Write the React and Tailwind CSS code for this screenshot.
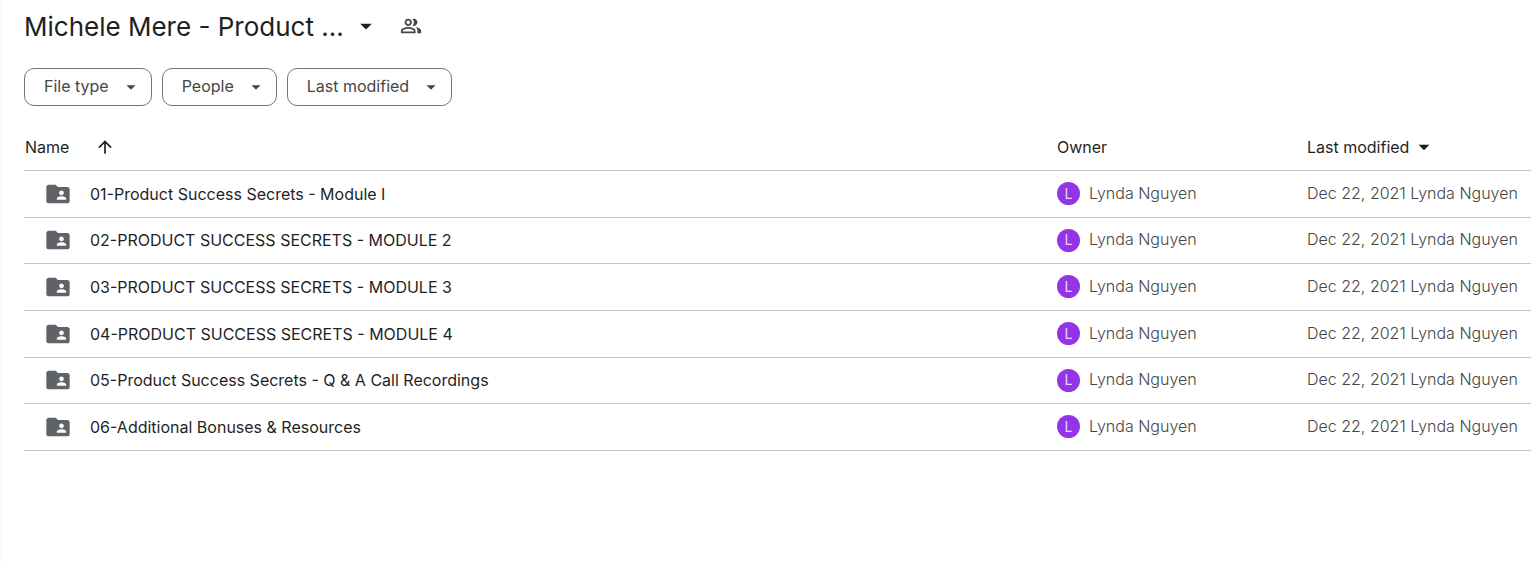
import { MdArrowDropDown, MdArrowUpward, MdFolderShared, MdOutlinePeopleAlt } from 'react-icons/md';

const filters = ['File type', 'People', 'Last modified'];

const folders = [
    '01-Product Success Secrets - Module I',
    '02-PRODUCT SUCCESS SECRETS - MODULE 2',
    '03-PRODUCT SUCCESS SECRETS - MODULE 3',
    '04-PRODUCT SUCCESS SECRETS - MODULE 4',
    '05-Product Success Secrets - Q & A Call Recordings',
    '06-Additional Bonuses & Resources',
].map((name) => ({ name, owner: 'Lynda Nguyen', modified: 'Dec 22, 2021' }));

const FilterChip = ({ label }) => (
    <button type="button" className="flex h-[38px] items-center gap-[11px] rounded-[10px] border border-[#747775] pl-[19px] pr-[9px] text-[#444746]">
        <span className="pb-0.5">{label}</span>
        <MdArrowDropDown size={22} />
    </button>
);

const App = () => {
    return (
        <main className="min-h-screen border-l border-[#f8fafd] bg-white pl-[23px] font-['Inter','Google_Sans',sans-serif] text-base text-[#1f1f1f]">
            <header className="flex h-[52px] items-center">
                <h1 className="text-[26px]">Michele Mere - Product ...</h1>
                <button type="button" aria-label="Folder options" className="ml-2">
                    <MdArrowDropDown size={28} />
                </button>
                <button type="button" aria-label="Shared with" className="ml-5 text-[#444746]">
                    <MdOutlinePeopleAlt size={22} />
                </button>
            </header>

            <div className="mt-4 flex gap-[10px]">
                {filters.map((label) => (
                    <FilterChip key={label} label={label} />
                ))}
            </div>

            <table className="mt-[18px] w-full table-fixed text-left">
                <thead>
                    <tr className="h-[46px] border-b border-[#c7c7c7]">
                        <th className="pl-px font-normal">
                            <button type="button" className="flex items-center gap-[26px]">
                                Name
                                <MdArrowUpward size={20} />
                            </button>
                        </th>
                        <th className="w-[250px] font-normal">Owner</th>
                        <th className="w-[224px] font-normal">
                            <button type="button" className="flex items-center gap-0.5">
                                Last modified
                                <MdArrowDropDown size={26} />
                            </button>
                        </th>
                    </tr>
                </thead>
                <tbody>
                    {folders.map((folder) => (
                        <tr key={folder.name} className="h-[47px] border-b border-[#c7c7c7] nth-[3n+2]:h-[46px]">
                            <td className="pl-px">
                                <a href="#" className="flex items-center gap-[18px] pl-[19px]">
                                    <MdFolderShared size={28} className="shrink-0 text-[#5f6368]" />
                                    <span className="truncate">{folder.name}</span>
                                </a>
                            </td>
                            <td>
                                <div className="flex items-center gap-[9px] font-light text-[#444746]">
                                    <span className="flex size-[23px] items-center justify-center rounded-full bg-[#9334e6] text-sm font-normal text-[#e9d2fd]">L</span>
                                    <span className="pb-0.5">{folder.owner}</span>
                                </div>
                            </td>
                            <td className="whitespace-nowrap pb-0.5 font-light text-[#444746]">
                                {folder.modified} {folder.owner}
                            </td>
                        </tr>
                    ))}
                </tbody>
            </table>
        </main>
    );
};

export default App;
